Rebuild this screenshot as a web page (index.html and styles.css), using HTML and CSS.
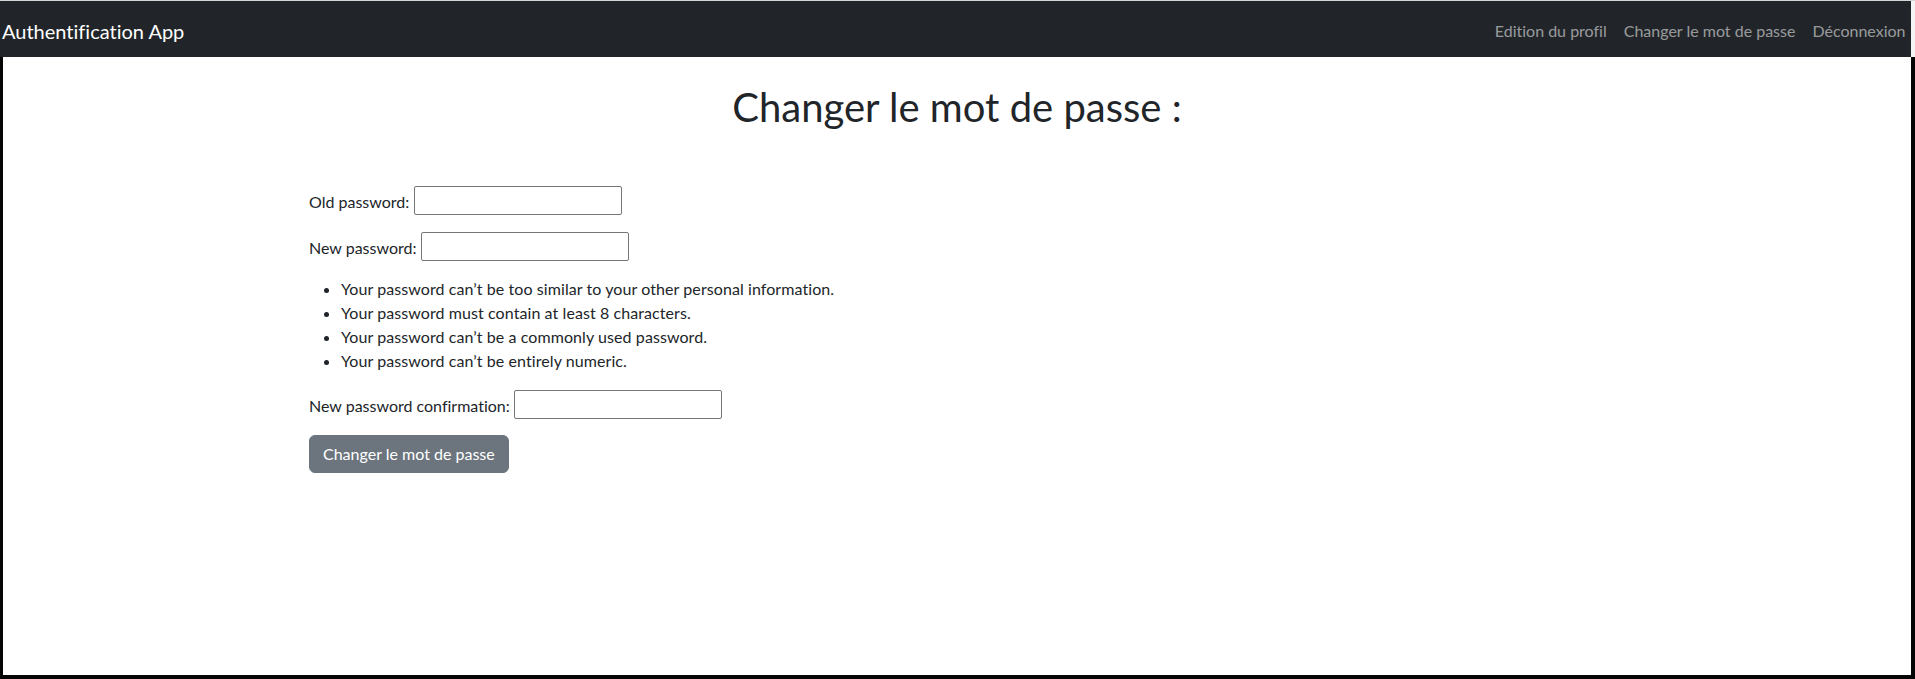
FILE: index.html
```html
<!DOCTYPE html>
<html lang="fr">
<head>
<meta charset="utf-8">
<title>Changer le mot de passe</title>
<link rel="stylesheet" href="styles.css">
</head>
<body>
  <div class="topline"></div>
  <div class="navrow">
    <nav class="navbar">
      <a class="brand" href="#">Authentification App</a>
      <ul class="nav-links">
        <li><a class="nav-link" href="#">Edition du profil</a></li>
        <li><a class="nav-link" href="#">Changer le mot de passe</a></li>
        <li><a class="nav-link" href="#">Déconnexion</a></li>
      </ul>
    </nav>
    <div class="navgap"></div>
  </div>
  <main class="frame">
    <div class="container">
      <h1 class="title">Changer le mot de passe :</h1>
      <form class="pw-form">
        <p class="field"><label for="old">Old password:</label><input id="old" type="password"></p>
        <p class="field"><label for="new1">New password:</label><input id="new1" type="password"></p>
        <ul class="helptext">
          <li>Your password can’t be too similar to your other personal information.</li>
          <li>Your password must contain at least 8 characters.</li>
          <li>Your password can’t be a commonly used password.</li>
          <li>Your password can’t be entirely numeric.</li>
        </ul>
        <p class="field"><label for="new2">New password confirmation:</label><input id="new2" type="password"></p>
        <button class="btn" type="submit">Changer le mot de passe</button>
      </form>
    </div>
  </main>
</body>
</html>
```

FILE: styles.css
```css
html, body {
  margin: 0;
  padding: 0;
}
body {
  width: 1915px;
  height: 679px;
  display: flex;
  flex-direction: column;
  overflow: hidden;
  background: #ffffff;
  font-family: "Lato", "Roboto", sans-serif;
  font-size: 16px;
  line-height: 24px;
  color: #212529;
  font-variant-ligatures: none;
  font-feature-settings: "liga" 0, "clig" 0;
}
.topline {
  height: 1px;
  background: #d4d4d4;
  flex: none;
}
.navrow {
  display: flex;
  height: 56px;
  flex: none;
}
.navbar {
  flex: 1;
  background: #212529;
  display: flex;
  align-items: center;
  justify-content: space-between;
}
.navgap {
  width: 4px;
  background: #f4f4f4;
}
.brand {
  margin-left: 2px;
  padding: 7px 0 3px;
  font-size: 20px;
  line-height: 30px;
  color: #ffffff;
  text-decoration: none;
}
.nav-links {
  display: flex;
  list-style: none;
  margin: 0 -3px 0 0;
  padding: 0;
}
.nav-link {
  display: block;
  padding: 10px 8.5px 6px;
  color: rgba(255, 255, 255, 0.55);
  text-decoration: none;
}
.frame {
  flex: 1;
  border-left: 3px solid #050505;
  border-right: 4px solid #050505;
  border-bottom: 4px solid #050505;
}
.container {
  width: 1320px;
  margin: 0 auto;
  padding: 0 12px;
  box-sizing: border-box;
}
.title {
  margin: 26px 0 54px;
  font-size: 40px;
  line-height: 48px;
  font-weight: 400;
  text-align: center;
}
.pw-form {
  margin: 0;
}
.field {
  display: flex;
  align-items: center;
  gap: 4.5px;
  height: 30px;
  margin: 0 0 16px;
}
.field label {
  padding-top: 3px;
}
.field input {
  box-sizing: border-box;
  width: 208px;
  height: 29px;
  margin: 0;
  padding: 1px 2px;
  border: 1px solid #767676;
  border-radius: 2px;
  background: #ffffff;
  font: inherit;
}
.helptext {
  margin: 0 0 16px;
  padding-left: 32px;
  letter-spacing: 0.08px;
}
.btn {
  display: inline-block;
  padding: 6px 13px;
  font-family: inherit;
  font-size: 16px;
  line-height: 24px;
  color: #ffffff;
  background: #6c757d;
  border: 1px solid #6c757d;
  border-radius: 6px;
}
```
